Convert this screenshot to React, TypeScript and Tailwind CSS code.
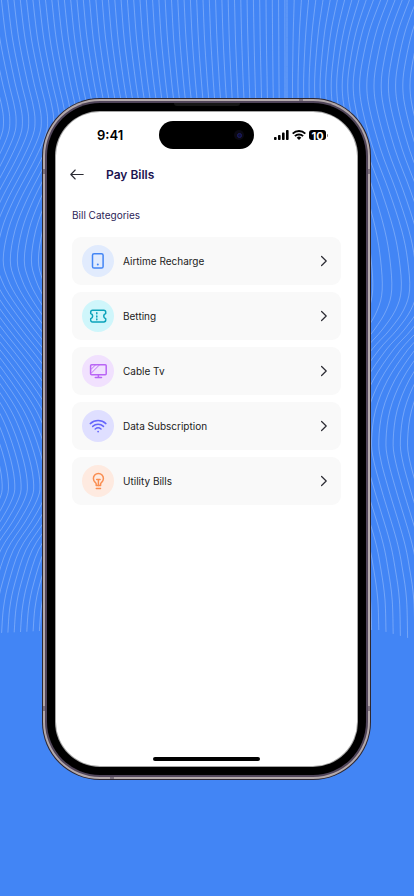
import type { ReactNode } from "react";

type Point = [number, number];

const LEFT_DRIFT: Point[] = [
  [0, 0], [40, 5], [80, 13], [105, 19], [120, 21], [135, 19], [160, 8], [200, -13],
  [230, -25], [260, -30], [280, -25], [300, -14], [330, 8], [363, 34], [400, 60],
  [427, 74], [460, 85], [485, 89], [500, 86], [522, 74], [550, 56], [583, 45], [607, 40], [633, 38],
];

const RIGHT_DRIFT: Point[] = [
  [0, 0], [30, -11], [60, -18], [85, -21], [110, -18], [150, -7], [190, 8], [230, 21],
  [260, 27], [290, 29], [310, 23], [330, 9], [350, -9], [380, -29], [410, -41],
  [440, -45], [460, -43], [490, -35], [540, -20], [570, -14], [600, -10], [630, -9],
];

function smoothPath(points: Point[]): string {
  let d = `M${points[0][0].toFixed(1)} ${points[0][1].toFixed(1)}`;
  for (let i = 0; i < points.length - 1; i++) {
    const p0 = points[Math.max(0, i - 1)];
    const p1 = points[i];
    const p2 = points[i + 1];
    const p3 = points[Math.min(points.length - 1, i + 2)];
    const c = [
      p1[0] + (p2[0] - p0[0]) / 6,
      p1[1] + (p2[1] - p0[1]) / 6,
      p2[0] - (p3[0] - p1[0]) / 6,
      p2[1] - (p3[1] - p1[1]) / 6,
      p2[0],
      p2[1],
    ];
    d += `C${c.map((n) => n.toFixed(1)).join(" ")}`;
  }
  return d;
}

function buildWaves(): string[] {
  const paths: string[] = [];
  for (let x = -112; x < 287; x += 6.3) {
    const weight = x < 30 ? 1 : (287 - x) / 257;
    const lift = Math.min(2, Math.max(0, (x + 38) / 20));
    paths.push(smoothPath(LEFT_DRIFT.map(([y, dx]) => [x + dx * weight, y > 620 ? y - lift : y])));
  }
  for (let x = 287; x < 475; x += 7.2) {
    const weight = Math.min(1, (x - 287) / 90);
    const drop = Math.max(0, (x - 388) / 3.6);
    paths.push(smoothPath(RIGHT_DRIFT.map(([y, dx]) => [x + dx * weight, y > 620 ? y + drop : y])));
  }
  return paths;
}

const WAVES = buildWaves();

function Waves() {
  return (
    <svg viewBox="0 0 414 660" className="absolute inset-x-0 top-0 w-full" aria-hidden="true" fill="none" stroke="#fff" strokeOpacity="0.45" strokeWidth="0.6">
      {WAVES.map((d) => (
        <path key={d} d={d} />
      ))}
    </svg>
  );
}

type IconProps = { children: ReactNode };

function Glyph({ children }: IconProps) {
  return (
    <svg width="20" height="20" viewBox="0 0 20 20" fill="none" stroke="currentColor" strokeWidth="1.5" strokeLinecap="round" strokeLinejoin="round" aria-hidden="true">
      {children}
    </svg>
  );
}

const categories = [
  {
    label: "Airtime Recharge",
    tone: "bg-[#e1ebfd] text-[#4285f5]",
    icon: (
      <Glyph>
        <rect x="4.5" y="2.7" width="10.6" height="14.4" rx="1.6" />
        <circle cx="9.8" cy="13.6" r="1" fill="currentColor" stroke="none" />
      </Glyph>
    ),
  },
  {
    label: "Betting",
    tone: "bg-[#cff6fb] text-[#0ba3ba]",
    icon: (
      <Glyph>
        <path d="M4.6 4.2h11.2c1.2 0 1.9.7 1.9 1.9v1.4a2.7 2.7 0 0 0 0 5.2v1.4c0 1.2-.7 1.9-1.9 1.9H4.6c-1.2 0-1.900-.7-1.900-1.900v-1.400a2.700 2.700 0 0 0 0-5.200V6.100c0-1.200.7-1.900 1.900-1.900Z" />
        <path d="M8.800 6.700v7" strokeDasharray="1 2.200" />
      </Glyph>
    ),
  },
  {
    label: "Cable Tv",
    tone: "bg-[#f1e1fe] text-[#b965f5]",
    icon: (
      <Glyph>
        <rect x="2.600" y="3.800" width="15.600" height="9.900" rx="1" />
        <path d="M10.400 13.700v2.600M7.300 16.500h6.200" />
        <path d="M3.200 8.200 7.200 4.200M3.200 12.200l7.800-7.800" strokeWidth="0.9" />
      </Glyph>
    ),
  },
  {
    label: "Data Subscription",
    tone: "bg-[#dfdfff] text-[#6565fb]",
    icon: (
      <Glyph>
        <path d="M2.300 7.600a11.600 11.600 0 0 1 15.600 0M4.700 10.400a8.100 8.100 0 0 1 10.800 0M7.200 13a4.500 4.500 0 0 1 5.800 0" />
        <circle cx="10.100" cy="15.600" r="0.900" fill="currentColor" stroke="none" />
      </Glyph>
    ),
  },
  {
    label: "Utility Bills",
    tone: "bg-[#feeae0] text-[#fa8d50]",
    icon: (
      <Glyph>
        <path d="M8.200 14.600v-1.500c0-.8-.4-1.200-1-1.800a5 5 0 1 1 6.400 0c-.6.600-1 1-1 1.800v1.500Z" />
        <path d="M8.700 8.400h3.400M10.400 8.400v6M8.300 17.500h4.200" />
      </Glyph>
    ),
  },
];

function StatusIcons() {
  return (
    <div className="flex items-center gap-[3px] pl-5">
      <svg width="15" height="10" viewBox="0 0 15 10" fill="#000" aria-hidden="true">
        <rect x="0" y="7" width="2.600" height="3" rx="0.800" />
        <rect x="4" y="5" width="2.600" height="5" rx="0.800" />
        <rect x="8" y="2.600" width="2.600" height="7.400" rx="0.800" />
        <rect x="12" y="0" width="2.600" height="10" rx="0.800" />
      </svg>
      <svg width="14" height="10" viewBox="0 0 14 10" fill="none" stroke="#000" strokeWidth="1.900" aria-hidden="true">
        <path d="M.7 3.600a9 9 0 0 1 12.600 0M2.900 6.200a5.800 5.800 0 0 1 8.200 0" />
        <path d="M7 10 4.700 7.700a3.200 3.200 0 0 1 4.600 0Z" fill="#000" stroke="none" />
      </svg>
      <div className="flex items-center gap-px">
        <div className="h-[10px] w-[17px] rounded-[3px] bg-black pt-px text-center text-[11px] leading-[10px] font-bold text-white">10</div>
        <div className="h-[3px] w-px rounded-r-full bg-black/50" />
      </div>
    </div>
  );
}

function Screen() {
  return (
    <div className="flex h-full flex-col rounded-[44px] bg-white">
      <div className="grid h-[37px] grid-cols-[1fr_95px_1fr] items-center pt-[9px]">
        <div className="pl-[41px] text-[13px] leading-7 font-semibold text-black">9:41</div>
        <div className="flex h-7 items-center justify-end rounded-full bg-black pr-[10px]">
          <div className="flex size-[10px] items-center justify-center rounded-full bg-[#0b0913]">
            <div className="size-[5px] rounded-full border border-[#1c1d66] bg-[#10103a]" />
          </div>
        </div>
        <StatusIcons />
      </div>

      <header className="mt-[14px] flex h-6 items-center gap-[22px] px-[14px]">
        <button type="button" aria-label="Back" className="text-[#2b2b33]">
          <svg width="14" height="12" viewBox="0 0 14 12" fill="none" stroke="currentColor" strokeWidth="1.100" strokeLinecap="round" strokeLinejoin="round" aria-hidden="true">
            <path d="M13.200 5.500H.8M5.200 1 .8 5.500l4.400 4.500" />
          </svg>
        </button>
        <h1 className="text-[12px] leading-6 font-semibold text-[#1b1350]">Pay Bills</h1>
      </header>

      <main className="mt-5 px-4">
        <h2 className="text-[10px] leading-4 text-[#2c2458]">Bill Categories</h2>
        <ul className="mt-[14px] flex flex-col gap-[7px]">
          {categories.map((item) => (
            <li key={item.label}>
              <button type="button" className="flex h-12 w-full items-center gap-[9px] rounded-[9px] bg-[#f9f9f9] pr-[14px] pl-[10px] text-left">
                <span className={`flex size-8 items-center justify-center rounded-full ${item.tone}`}>{item.icon}</span>
                <span className="flex-1 text-[10px] leading-4 text-[#222]">{item.label}</span>
                <svg width="7" height="12" viewBox="0 0 7 12" fill="none" stroke="#2b2b33" strokeWidth="1.200" strokeLinecap="round" strokeLinejoin="round" aria-hidden="true">
                  <path d="M1.600 1.500 6.200 6l-4.600 4.500" />
                </svg>
              </button>
            </li>
          ))}
        </ul>
      </main>

      <div className="mx-auto mt-auto mb-[5px] h-1 w-[107px] rounded-full bg-black" />
    </div>
  );
}

export default function App() {
  return (
    <div className="relative min-h-screen overflow-hidden bg-[#4285f5] pt-[98px] pr-[43px] pb-16 pl-[42px] font-['Inter','Liberation_Sans',sans-serif]">
      <Waves />
      <div className="relative mx-auto aspect-[329/682] max-w-[329px] rounded-[58px] bg-[#2d2730] p-px">
        <div className="h-full rounded-[57px] bg-[#b3a9ab] p-[2px]">
          <div className="h-full rounded-[55px] bg-[#51465a] p-[2px]">
            <div className="h-full rounded-[53px] bg-black p-2">
              <div className="h-full rounded-[45px] bg-[#a5a5a5] p-px">
                <Screen />
              </div>
            </div>
          </div>
        </div>
        <div className="absolute top-[5px] left-1/2 h-[3px] w-[66px] -translate-x-1/2 rounded-b-sm bg-[#161616]" />
        <div className="absolute top-px right-[68px] h-[2px] w-1 bg-[#7d727d]" />
        <div className="absolute bottom-px left-[68px] h-[2px] w-1 bg-[#7d727d]" />
        <div className="absolute top-[71px] left-px h-[5px] w-[2px] bg-[#7d727d]" />
        <div className="absolute top-[71px] right-px h-[5px] w-[2px] bg-[#7d727d]" />
        <div className="absolute bottom-[69px] left-px h-[5px] w-[2px] bg-[#7d727d]" />
        <div className="absolute right-px bottom-[69px] h-[5px] w-[2px] bg-[#7d727d]" />
      </div>
    </div>
  );
}
